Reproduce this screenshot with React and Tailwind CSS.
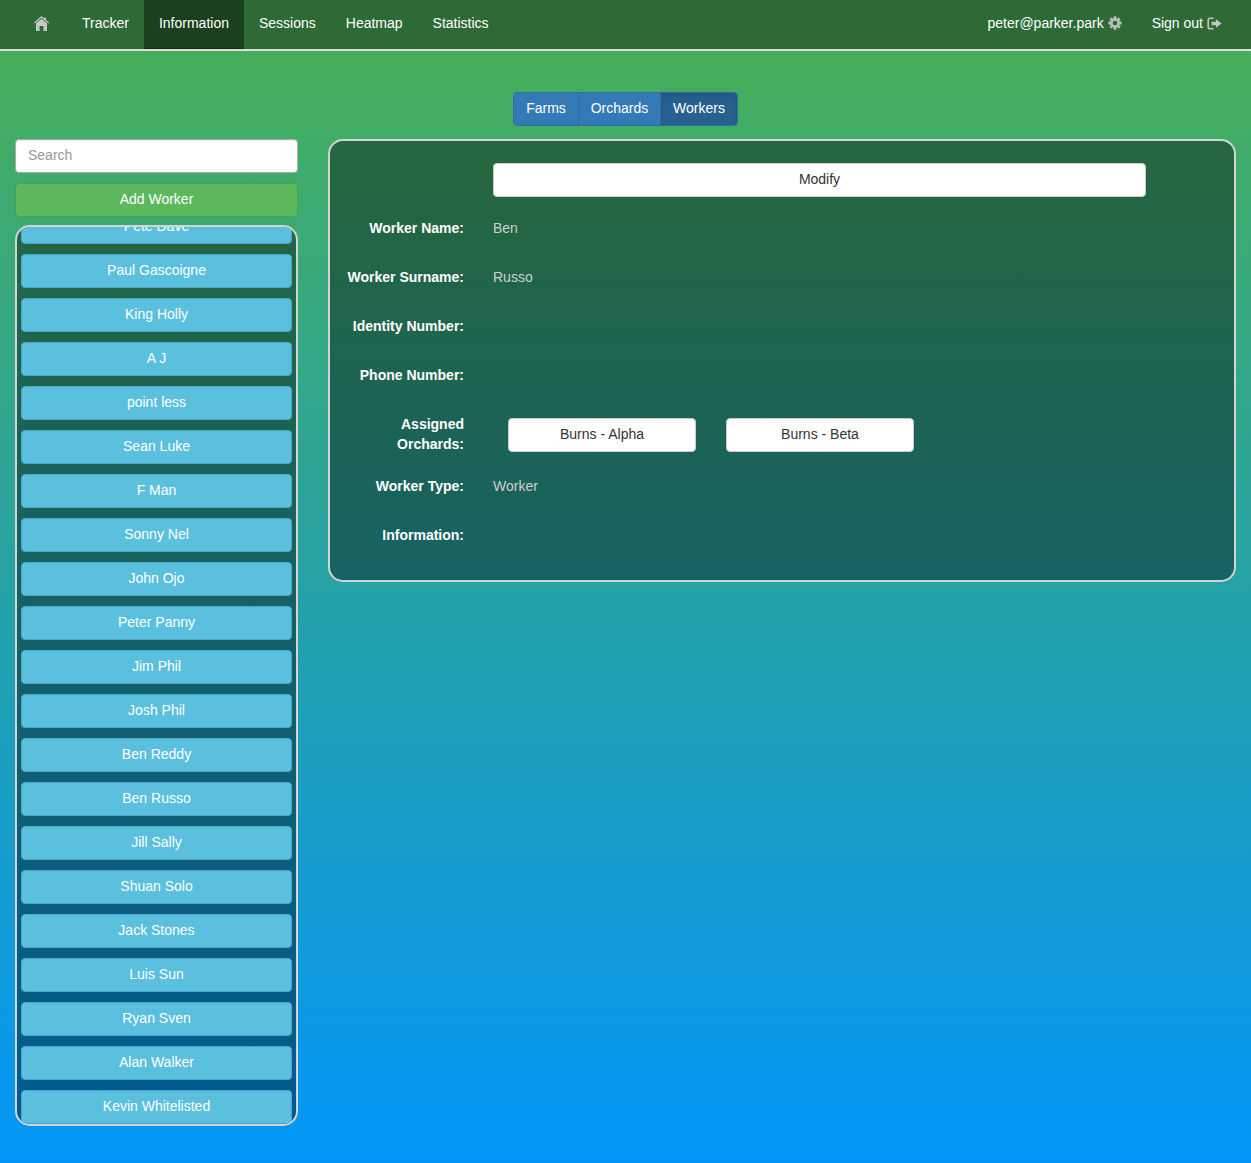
const font = { fontFamily: '"Liberation Sans", Arial, sans-serif' };

const workers = [
  "Paul Gascoigne", "King Holly", "A J", "point less", "Sean Luke", "F Man", "Sonny Nel", "John Ojo",
  "Peter Panny", "Jim Phil", "Josh Phil", "Ben Reddy", "Ben Russo", "Jill Sally", "Shuan Solo",
  "Jack Stones", "Luis Sun", "Ryan Sven", "Alan Walker", "Kevin Whitelisted",
];

function HomeIcon() {
  return (
    <svg width="18" height="15" viewBox="1 0 18 15" fill="#c6c8c6">
      <path d="M8.5 0 L11.2 2.4 V1.4 H13 V4 L16 6.6 L15.4 7.4 L8.5 1.8 L1.6 7.4 L1 6.6 Z" />
      <path d="M3 7.2 L8.5 2.8 L14 7.2 V15 H10.4 V10 H6.6 V15 H3 Z" />
    </svg>
  );
}

function CogIcon() {
  return (
    <svg width="14" height="14" viewBox="0 0 14 14">
      <g fill="#b9bdb9">
        <circle cx="7" cy="7" r="5" />
        <rect x="5.6" y="0.3" width="2.8" height="13.4" rx="0.5" />
        <rect x="5.6" y="0.3" width="2.8" height="13.4" rx="0.5" transform="rotate(45 7 7)" />
        <rect x="5.6" y="0.3" width="2.8" height="13.4" rx="0.5" transform="rotate(90 7 7)" />
        <rect x="5.6" y="0.3" width="2.8" height="13.4" rx="0.5" transform="rotate(135 7 7)" />
      </g>
      <circle cx="7" cy="7" r="2.3" fill="#2d6a35" />
    </svg>
  );
}

function LogoutIcon() {
  return (
    <svg width="15" height="13" viewBox="0 0 15 13" fill="#c4c7c4">
      <path d="M6.5 0.5 H3 A2.6 2.6 0 0 0 0.4 3.1 V9.9 A2.6 2.6 0 0 0 3 12.5 H6.5 V11 H3.2 A1.2 1.2 0 0 1 2 9.8 V3.2 A1.2 1.2 0 0 1 3.2 2 H6.5 Z" />
      <path d="M9 2.2 L14.6 6.5 L9 10.8 V8.2 H4.6 V4.8 H9 Z" />
    </svg>
  );
}

function NavLink({ children, active }) {
  return (
    <a className={`flex h-full items-center px-[15px] pb-[3px] text-sm text-white ${active ? "bg-[#1b401e] shadow-[inset_0_-1px_0_#122c15]" : ""}`}>
      {children}
    </a>
  );
}

function Row({ label, value, className = "" }) {
  return (
    <div className={`flex items-start ${className}`}>
      <div className="w-[118px] text-right text-sm font-bold leading-5 text-white">{label}</div>
      <div className="ml-[29px] text-sm leading-5 text-[#cfcfcf]">{value}</div>
    </div>
  );
}

function OrchardButton({ children }) {
  return (
    <button className="h-[34px] w-[188px] rounded border border-[#ccc] bg-white pb-[2px] text-sm text-[#333]">{children}</button>
  );
}

function WorkerButton({ children }) {
  return (
    <button className="h-[34px] shrink-0 rounded border border-[#4ba6c6] bg-[#5bc0de] pb-[2px] text-sm text-white">
      {children}
    </button>
  );
}

export default function App() {
  return (
    <div
      className="flex min-h-[1163px] flex-col bg-[linear-gradient(#46ae5a_51px,#0396f9)]"
      style={font}
    >
      <nav className="flex h-[51px] items-stretch justify-between border-b-2 border-[#ddd] bg-[#2d6a35] pl-[19px] pr-[14px]">
        <div className="flex items-center">
          <NavLink><HomeIcon /></NavLink>
          <NavLink>Tracker</NavLink>
          <NavLink active>Information</NavLink>
          <NavLink>Sessions</NavLink>
          <NavLink>Heatmap</NavLink>
          <NavLink>Statistics</NavLink>
        </div>
        <div className="flex items-center">
          <NavLink><span>peter@parker.park</span><span className="ml-1"><CogIcon /></span></NavLink>
          <NavLink><span>Sign out</span><span className="ml-1"><LogoutIcon /></span></NavLink>
        </div>
      </nav>

      <div className="mt-[41px] flex justify-center">
        <div className="flex h-[34px] overflow-hidden rounded border border-[#2e6da4] text-sm text-white">
          <button className="w-[65px] border-r border-[#2e6da4] bg-[#337ab7] pb-[2px]">Farms</button>
          <button className="w-[82px] border-r border-[#2e6da4] bg-[#337ab7] pb-[2px]">Orchards</button>
          <button className="w-[76px] bg-[#286090] pb-[2px] shadow-[inset_0_3px_5px_rgba(0,0,0,0.125)]">Workers</button>
        </div>
      </div>

      <div className="mt-[13px] flex items-start gap-[30px] px-[15px]">
        <div className="flex w-[283px] shrink-0 flex-col">
          <input
            placeholder="Search"
            className="h-[34px] w-full rounded border border-[#aaa] bg-white px-3 pb-[2px] text-sm text-[#555] shadow-[inset_0_1px_1px_rgba(0,0,0,0.075)] placeholder:text-[#999]"
          />
          <button className="mt-[10px] h-[34px] w-full rounded border border-[#4a9e55] bg-[#5cb85c] pb-[2px] text-sm text-white">
            Add Worker
          </button>
          <div className="mt-[8px] h-[901px] overflow-hidden rounded-[15px] border-2 border-[#d4d4d4] bg-black/40 px-1">
            <div className="-mt-[17px] flex flex-col gap-[10px]">
              <WorkerButton>Pete Dave</WorkerButton>
              {workers.map((w) => (
                <WorkerButton key={w}>{w}</WorkerButton>
              ))}
            </div>
          </div>
        </div>

        <div className="h-[443px] flex-1 rounded-[15px] border-2 border-[#d4d4d4] bg-black/40 pl-4 pt-[22px]">
          <button className="ml-[147px] h-[34px] w-[653px] rounded border border-[#ccc] bg-white pb-[2px] text-sm text-[#333]">Modify</button>
          <Row label="Worker Name:" value="Ben" className="mt-[21px]" />
          <Row label="Worker Surname:" value="Russo" className="mt-[29px]" />
          <Row label="Identity Number:" className="mt-[29px]" />
          <Row label="Phone Number:" className="mt-[29px]" />
          <div className="mt-[29px] flex items-start">
            <div className="w-[118px] text-right text-sm font-bold leading-5 text-white">Assigned Orchards:</div>
            <div className="ml-[44px] flex gap-[30px] pt-[4px]">
              <OrchardButton>Burns - Alpha</OrchardButton>
              <OrchardButton>Burns - Beta</OrchardButton>
            </div>
          </div>
          <Row label="Worker Type:" value="Worker" className="mt-[22px]" />
          <Row label="Information:" className="mt-[29px]" />
        </div>
      </div>
    </div>
  );
}
